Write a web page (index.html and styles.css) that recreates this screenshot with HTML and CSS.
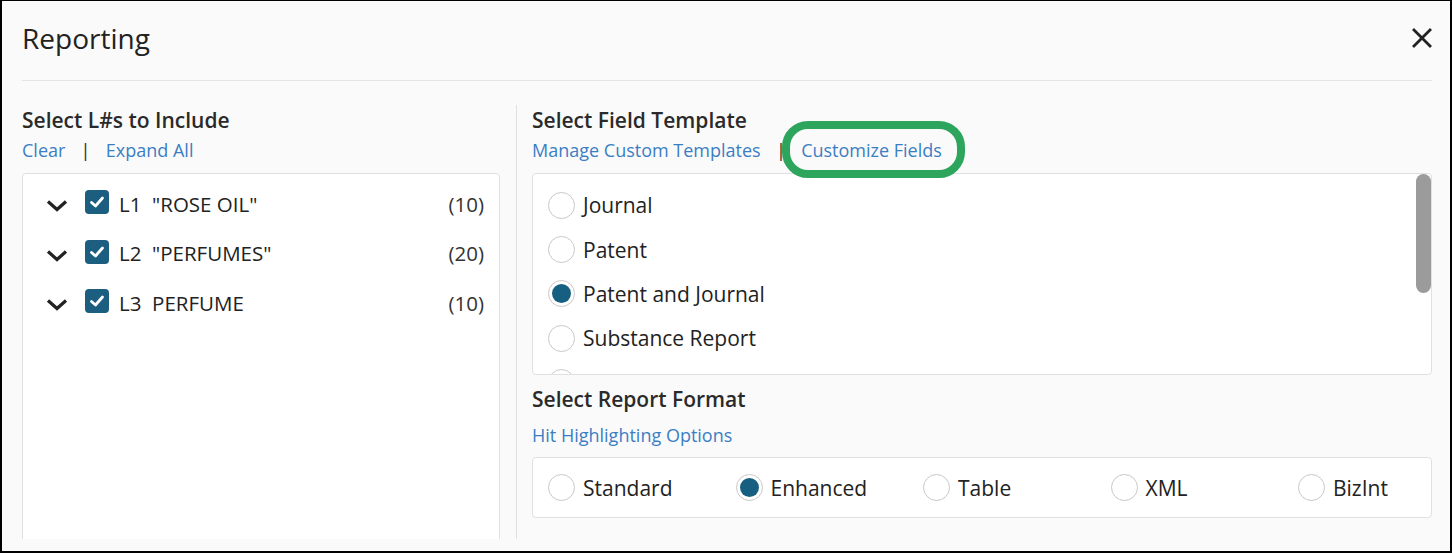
FILE: index.html
```html
<!DOCTYPE html>
<html>
<head>
<meta charset="utf-8">
<link rel="stylesheet" href="styles.css">
</head>
<body>
<div class="frame">
  <header class="header">
    <h1 class="title">Reporting</h1>
    <button class="close" aria-label="Close">
      <svg width="20" height="20" viewBox="0 0 20 20"><path d="M2 2 L18 18 M18 2 L2 18" stroke="#222" stroke-width="2.8" stroke-linecap="square"/></svg>
    </button>
  </header>
  <div class="content">
    <section class="col left">
      <h2 class="heading">Select L#s to Include</h2>
      <div class="links"><a class="link">Clear</a><span class="sep">|</span><a class="link">Expand All</a></div>
      <div class="tree">
        <div class="row">
          <svg class="chev" width="22" height="13" viewBox="0 0 22 13"><path d="M2 2.5 L11 10.5 L20 2.5" fill="none" stroke="#222" stroke-width="3.2"/></svg>
          <span class="cb"><svg width="18" height="18" viewBox="0 0 18 18"><path d="M3.5 9.5 L7.5 13 L14.5 5" fill="none" stroke="#fff" stroke-width="2.8" stroke-linecap="round" stroke-linejoin="round"/></svg></span>
          <span class="label">L1&nbsp; "ROSE OIL"</span>
          <span class="count">(10)</span>
        </div>
        <div class="row">
          <svg class="chev" width="22" height="13" viewBox="0 0 22 13"><path d="M2 2.5 L11 10.5 L20 2.5" fill="none" stroke="#222" stroke-width="3.2"/></svg>
          <span class="cb"><svg width="18" height="18" viewBox="0 0 18 18"><path d="M3.5 9.5 L7.5 13 L14.5 5" fill="none" stroke="#fff" stroke-width="2.8" stroke-linecap="round" stroke-linejoin="round"/></svg></span>
          <span class="label">L2&nbsp; "PERFUMES"</span>
          <span class="count">(20)</span>
        </div>
        <div class="row">
          <svg class="chev" width="22" height="13" viewBox="0 0 22 13"><path d="M2 2.5 L11 10.5 L20 2.5" fill="none" stroke="#222" stroke-width="3.2"/></svg>
          <span class="cb"><svg width="18" height="18" viewBox="0 0 18 18"><path d="M3.5 9.5 L7.5 13 L14.5 5" fill="none" stroke="#fff" stroke-width="2.8" stroke-linecap="round" stroke-linejoin="round"/></svg></span>
          <span class="label">L3&nbsp; PERFUME</span>
          <span class="count">(10)</span>
        </div>
      </div>
    </section>
    <div class="vdivider"></div>
    <section class="col right">
      <h2 class="heading">Select Field Template</h2>
      <div class="links"><a class="link">Manage Custom Templates</a><span class="sep">|</span><a class="link highlight">Customize Fields</a></div>
      <div class="templates">
        <div class="tlist">
          <div class="opt"><span class="radio"></span><span class="olabel">Journal</span></div>
          <div class="opt"><span class="radio"></span><span class="olabel">Patent</span></div>
          <div class="opt"><span class="radio on"></span><span class="olabel">Patent and Journal</span></div>
          <div class="opt"><span class="radio"></span><span class="olabel">Substance Report</span></div>
          <div class="opt"><span class="radio"></span></div>
        </div>
        <div class="track"><div class="thumb"></div></div>
      </div>
      <h2 class="heading fmt-heading">Select Report Format</h2>
      <div class="links fmt-links"><a class="link">Hit Highlighting Options</a></div>
      <div class="formats">
        <div class="fopt"><span class="radio"></span><span class="olabel">Standard</span></div>
        <div class="fopt"><span class="radio on"></span><span class="olabel">Enhanced</span></div>
        <div class="fopt"><span class="radio"></span><span class="olabel">Table</span></div>
        <div class="fopt"><span class="radio"></span><span class="olabel">XML</span></div>
        <div class="fopt"><span class="radio"></span><span class="olabel">BizInt</span></div>
      </div>
    </section>
  </div>
</div>
</body>
</html>
```

FILE: styles.css
```css
* { box-sizing: border-box; }
html, body { margin: 0; padding: 0; }
body {
  font-family: "Open Sans", "Noto Sans", sans-serif;
  color: #222;
  background: #fafafa;
}
.frame {
  width: 1452px;
  height: 553px;
  border: 2px solid #000;
  border-top-width: 1px;
  background: #fafafa;
  padding: 0 18px 0 20px;
  overflow: hidden;
}
.header {
  height: 80px;
  display: flex;
  align-items: center;
  justify-content: space-between;
  border-bottom: 1px solid #e3e3e3;
  padding-bottom: 6px;
}
.title {
  margin: 0;
  font-size: 28px;
  font-weight: 500;
  line-height: 36px;
  color: #222;
}
.close {
  border: 0;
  background: none;
  padding: 0;
  width: 20px;
  height: 20px;
  display: flex;
  cursor: pointer;
}
.content {
  display: flex;
  height: 458px;
  padding-top: 24px;
  overflow: hidden;
}
.col { display: flex; flex-direction: column; }
.col > * { flex: none; }
.left { width: 478px; flex: none; }
.vdivider {
  flex: none;
  width: 1px;
  background: #e0e0e0;
  margin: 0 15px 0 16px;
  height: 434px;
}
.right { flex: 1; min-width: 0; }
.heading {
  margin: 0;
  font-size: 21px;
  font-weight: 600;
  line-height: 30px;
  color: #2a2a2a;
}
.links {
  display: flex;
  align-items: center;
  font-size: 18px;
  line-height: 30px;
  height: 30px;
}
.link { color: #3a7ec4; cursor: pointer; }
.sep { color: #333; margin: 0 15px; font-size: 19px; }
.highlight { position: relative; }
.highlight::after {
  content: "";
  position: absolute;
  left: -19px;
  right: -23px;
  top: -14px;
  bottom: -13px;
  border: 8px solid #2ea55c;
  border-radius: 26px;
}
.tree {
  margin-top: 8px;
  height: 400px;
  background: #fff;
  border: 1px solid #e0e0e0;
  border-radius: 4px;
  padding: 5px 15px 0 23px;
}
.row {
  display: flex;
  align-items: center;
  height: 49.5px;
  font-size: 20.5px;
}
.chev { flex: none; margin-top: 4px; }
.cb {
  flex: none;
  width: 24px;
  height: 24px;
  border-radius: 4px;
  background: #1b5e80;
  margin-left: 17px;
  margin-right: 10px;
  margin-top: -3px;
  display: flex;
  align-items: center;
  justify-content: center;
}
.label { flex: 1; white-space: pre; color: #222; }
.count { color: #333; }
.templates {
  margin-top: 8px;
  height: 202px;
  background: #fff;
  border: 1px solid #e0e0e0;
  border-radius: 4px;
  display: flex;
  overflow: hidden;
}
.tlist {
  flex: 1;
  padding: 9px 0 0 15px;
  overflow: hidden;
}
.opt {
  display: flex;
  align-items: center;
  height: 44.4px;
}
.radio {
  flex: none;
  width: 27px;
  height: 27px;
  border-radius: 50%;
  border: 1.5px solid #c8c8c8;
  background: #fff;
  margin-right: 8px;
  position: relative;
}
.radio.on::after {
  content: "";
  position: absolute;
  left: 3px;
  top: 3px;
  right: 3px;
  bottom: 3px;
  border-radius: 50%;
  background: #175f80;
}
.olabel { font-size: 21px; color: #222; }
.track { width: 15px; flex: none; }
.thumb {
  width: 15px;
  height: 119px;
  background: #9b9b9b;
  border-radius: 8px;
}
.fmt-heading { margin-top: 9px; }
.fmt-links { margin-top: 6px; }
.formats {
  margin-top: 7px;
  height: 61px;
  background: #fff;
  border: 1px solid #e0e0e0;
  border-radius: 4px;
  display: flex;
  align-items: center;
  padding-left: 15px;
}
.fopt {
  display: flex;
  align-items: center;
  width: 187.5px;
  flex: none;
}
```
